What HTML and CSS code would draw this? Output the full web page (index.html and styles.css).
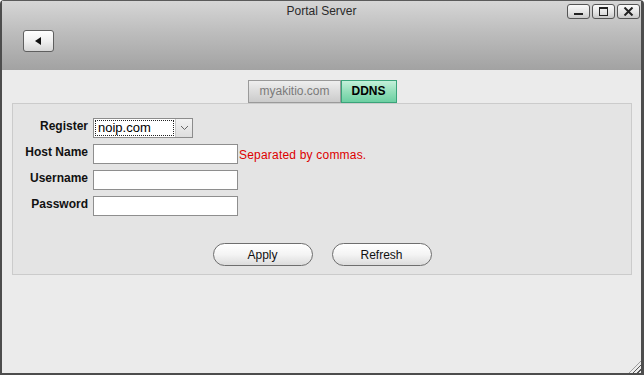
FILE: index.html
```html
<!DOCTYPE html>
<html lang="en">
<head>
    <meta charset="UTF-8">
    <title>Portal Server</title>
    <link rel="stylesheet" href="styles.css">
</head>
<body>
    <div class="window">
        <div class="header">
            <div class="titlebar">Portal Server</div>
            <div class="toolbar">
                <button class="back-btn" title="Back">
                    <svg width="10" height="10" viewBox="0 0 10 10"><path d="M2 5 L8 1 L8 9 Z" fill="#111"/></svg>
                </button>
            </div>
            <div class="win-controls">
                <span class="win-btn">
                    <svg width="11" height="9" viewBox="0 0 11 9"><rect x="1" y="6" width="9" height="2" fill="#222"/></svg>
                </span>
                <span class="win-btn">
                    <svg width="11" height="9" viewBox="0 0 11 9"><rect x="1.5" y="0.5" width="8" height="8" fill="none" stroke="#222"/><rect x="1" y="0" width="9" height="2" fill="#222"/></svg>
                </span>
                <span class="win-btn">
                    <svg width="11" height="9" viewBox="0 0 11 9"><path d="M1.5 0.5 L9.5 8.5 M9.5 0.5 L1.5 8.5" stroke="#222" stroke-width="2"/></svg>
                </span>
            </div>
        </div>

        <div class="content">
            <div class="tabs">
                <div class="tab">myakitio.com</div>
                <div class="tab tab-active">DDNS</div>
            </div>

            <div class="panel">
                <div class="form-grid">
                    <label class="form-label">Register</label>
                    <div class="select">
                        <span class="select-value">noip.com</span>
                        <span class="select-arrow">
                            <svg width="9" height="6" viewBox="0 0 9 6"><path d="M1 1 L4.5 4.5 L8 1" fill="none" stroke="#666"/></svg>
                        </span>
                    </div>
                    <span></span>

                    <label class="form-label">Host Name</label>
                    <input type="text" class="text-input">
                    <span class="hint">Separated by commas.</span>

                    <label class="form-label">Username</label>
                    <input type="text" class="text-input">
                    <span></span>

                    <label class="form-label">Password</label>
                    <input type="password" class="text-input">
                    <span></span>
                </div>

                <div class="actions">
                    <button class="pill-btn">Apply</button>
                    <button class="pill-btn">Refresh</button>
                </div>
            </div>
        </div>

        <div class="grip"></div>
    </div>
</body>
</html>
```

FILE: styles.css
```css
* {
    margin: 0;
    padding: 0;
    box-sizing: border-box;
    font-family: "Liberation Sans", Arial, sans-serif;
}

body {
    width: 644px;
    height: 375px;
    overflow: hidden;
    background-color: #ffffff;
}

.window {
    position: relative;
    width: 644px;
    height: 375px;
    background-color: #ebebeb;
    border-top: 1px solid #5a5a5a;
    border-left: 2px solid #4d4d4d;
    border-right: 3px solid #4d4d4d;
    border-bottom: 2px solid #4d4d4d;
    border-radius: 4px 4px 0 0;
}

.header {
    position: relative;
    height: 69px;
    background: linear-gradient(to bottom, #d6d6d6 0%, #bdbdbd 45%, #a2a2a2 100%);
}

.titlebar {
    height: 22px;
    line-height: 21px;
    text-align: center;
    font-size: 12px;
    color: #2a2a2a;
}

.toolbar {
    padding: 7px 0 0 21px;
}

.back-btn {
    width: 31px;
    height: 22px;
    border: 1px solid #5f5f5f;
    border-radius: 3px;
    background: linear-gradient(to bottom, #ffffff 0%, #f0f0f0 50%, #d6d6d6 100%);
    display: flex;
    align-items: center;
    justify-content: center;
    padding-right: 2px;
}

.win-controls {
    position: absolute;
    top: 3px;
    right: 1px;
    display: flex;
    gap: 2px;
}

.win-btn {
    width: 23px;
    height: 15px;
    border: 1px solid #555;
    border-radius: 3px;
    background: linear-gradient(to bottom, #fafafa 0%, #e2e2e2 60%, #c8c8c8 100%);
    display: flex;
    align-items: center;
    justify-content: center;
}

.content {
    padding: 10px 9px 0 10px;
}

.tabs {
    display: flex;
    justify-content: center;
    height: 23px;
    margin-left: 1px;
}

.tab {
    height: 23px;
    line-height: 21px;
    padding: 0 10px;
    font-size: 12px;
    color: #7a7a7a;
    border: 1px solid #9a9a9a;
    background: linear-gradient(to bottom, #eeeeee 0%, #dcdcdc 50%, #cbcbcb 100%);
}

.tab-active {
    padding: 0 10px;
    color: #000;
    font-weight: bold;
    border-color: #3aa37a;
    background: linear-gradient(to bottom, #c4f0da 0%, #93dfba 50%, #6ccfa2 100%);
}

.panel {
    background-color: #e4e4e4;
    border: 1px solid #cbcbcb;
    padding: 14px 0 8px 0;
}

.form-grid {
    display: grid;
    grid-template-columns: 75px 145px auto;
    grid-auto-rows: 20px;
    column-gap: 5px;
    row-gap: 6px;
}

.form-label {
    text-align: right;
    font-size: 12px;
    font-weight: bold;
    line-height: 14px;
    color: #111;
    margin-top: 1px;
}

.select {
    width: 100px;
    height: 20px;
    display: flex;
    border: 1px solid #8c8c8c;
    background-color: #ffffff;
}

.select-value {
    flex: 1;
    margin: 1px;
    border: 1px dotted #222;
    font-size: 13px;
    line-height: 14px;
    padding-left: 2px;
    color: #000;
}

.select-arrow {
    width: 17px;
    display: flex;
    align-items: center;
    justify-content: center;
    background: linear-gradient(to bottom, #f2f2f2, #dedede);
    border-left: 1px solid #c8c8c8;
}

.text-input {
    width: 145px;
    height: 20px;
    border: 1px solid #8e8e8e;
    background-color: #ffffff;
    font-size: 12px;
}

.hint {
    color: #dd0000;
    font-size: 12px;
    line-height: 20px;
    margin-left: -4px;
    margin-top: 1px;
    letter-spacing: 0.2px;
}

.actions {
    display: flex;
    justify-content: center;
    gap: 19px;
    margin-top: 27px;
}

.pill-btn {
    width: 100px;
    height: 23px;
    border: 1px solid #6e6e6e;
    border-radius: 12px;
    background: linear-gradient(to bottom, #ffffff 0%, #f4f4f4 50%, #dcdcdc 100%);
    font-size: 12px;
    line-height: 20px;
    color: #111;
}

.grip {
    position: absolute;
    right: 0;
    bottom: 0;
    width: 12px;
    height: 12px;
    background: repeating-linear-gradient(135deg, transparent 0 2px, #555 2px 3px);
    clip-path: polygon(100% 0, 100% 100%, 0 100%);
}
```
